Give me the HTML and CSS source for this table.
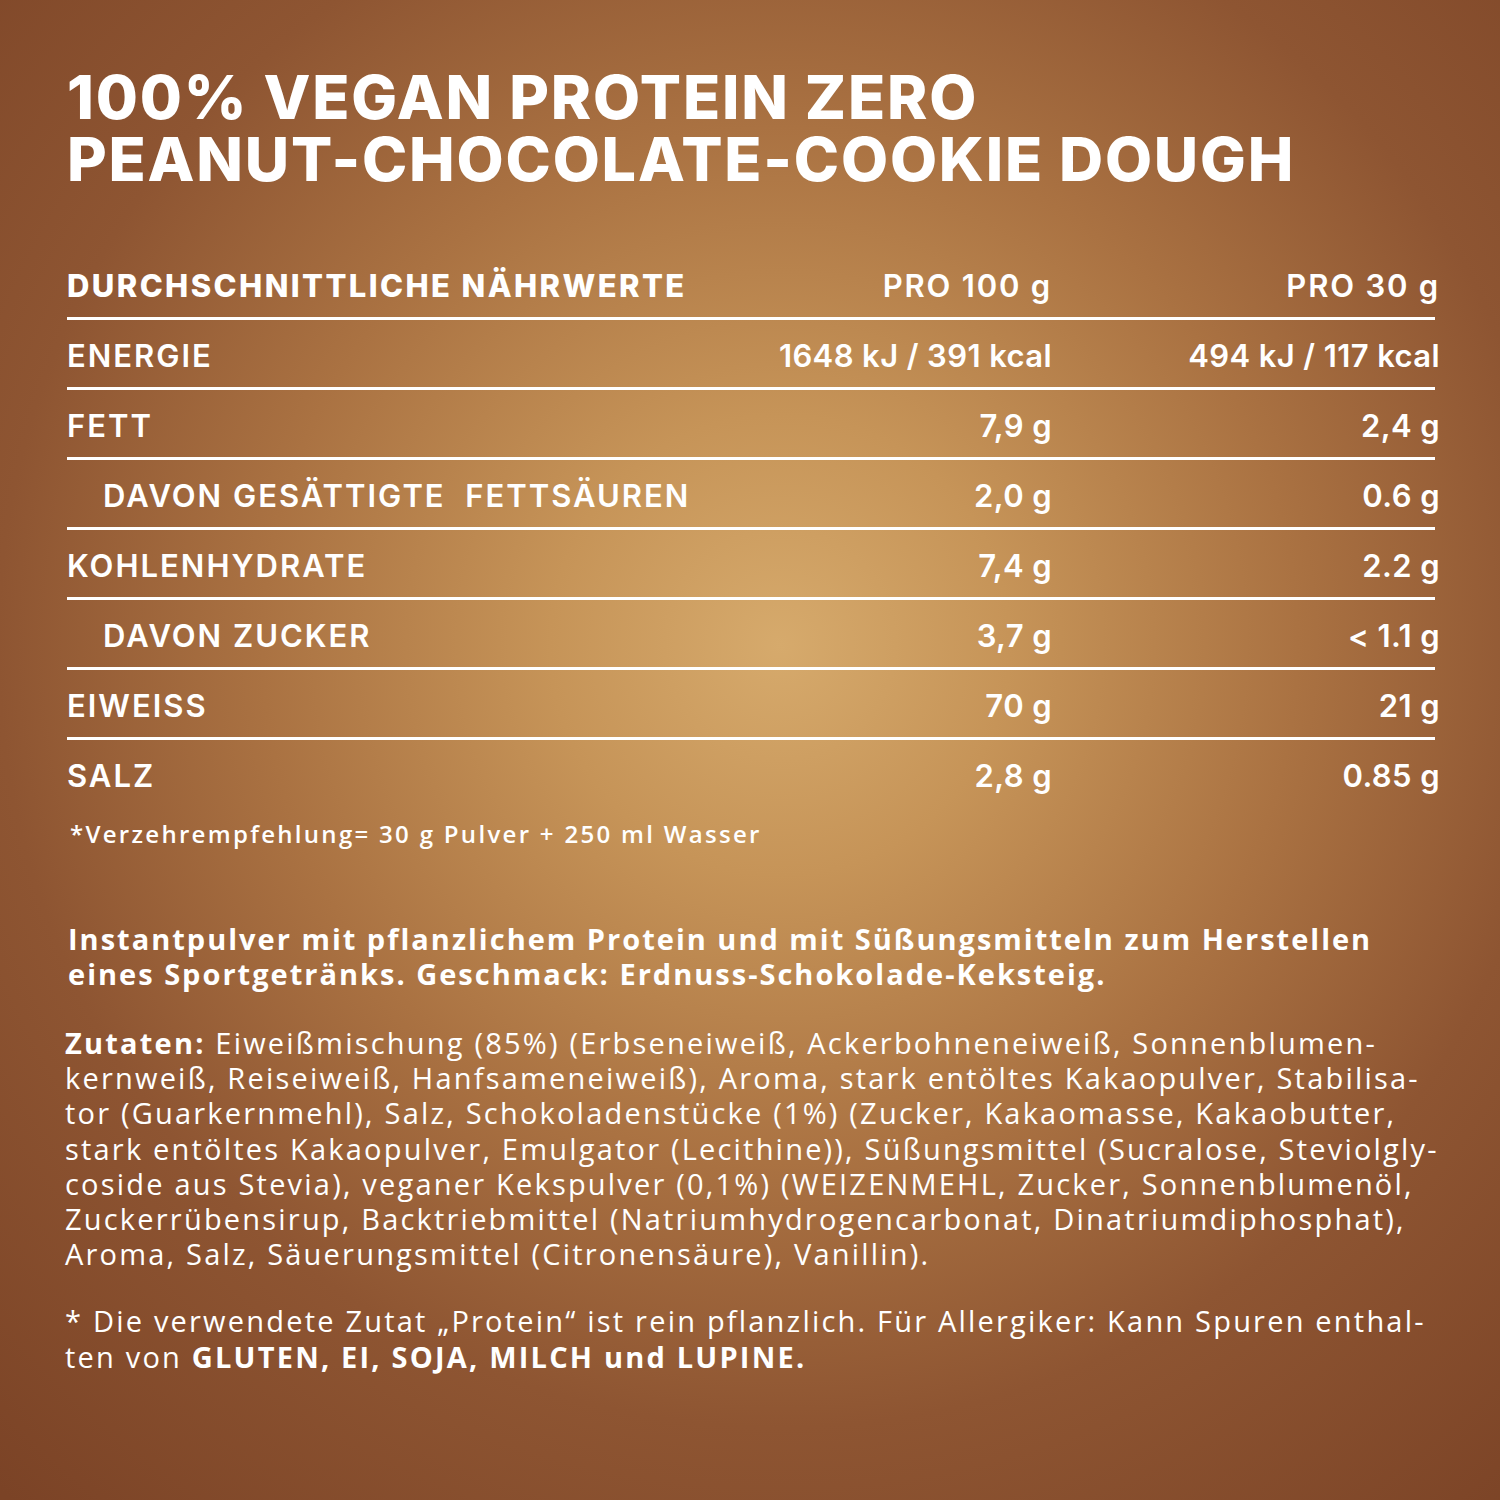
FILE: index.html
```html
<!DOCTYPE html>
<html lang="de">
<head>
<meta charset="utf-8">
<title>100% Vegan Protein Zero</title>
<link rel="stylesheet" href="styles.css">
</head>
<body>
<div class="page">
  <h1 class="title"><span class="tline">100% VEGAN PROTEIN ZERO</span><span class="tline">PEANUT-CHOCOLATE-COOKIE DOUGH</span></h1>

  <div class="table">
    <div class="row head">
      <div class="label">DURCHSCHNITTLICHE NÄHRWERTE</div>
      <div class="val">PRO 100 g</div>
      <div class="val">PRO 30 g</div>
    </div>
    <div class="row">
      <div class="label">ENERGIE</div>
      <div class="val">1648 kJ / 391 kcal</div>
      <div class="val">494 kJ / 117 kcal</div>
    </div>
    <div class="row">
      <div class="label">FETT</div>
      <div class="val">7,9 g</div>
      <div class="val">2,4 g</div>
    </div>
    <div class="row">
      <div class="label sub">DAVON GESÄTTIGTE &nbsp;FETTSÄUREN</div>
      <div class="val">2,0 g</div>
      <div class="val">0.6 g</div>
    </div>
    <div class="row">
      <div class="label">KOHLENHYDRATE</div>
      <div class="val">7,4 g</div>
      <div class="val">2.2 g</div>
    </div>
    <div class="row">
      <div class="label sub">DAVON ZUCKER</div>
      <div class="val">3,7 g</div>
      <div class="val">&lt; 1.1 g</div>
    </div>
    <div class="row">
      <div class="label">EIWEISS</div>
      <div class="val">70 g</div>
      <div class="val">21 g</div>
    </div>
    <div class="row last">
      <div class="label">SALZ</div>
      <div class="val">2,8 g</div>
      <div class="val">0.85 g</div>
    </div>
  </div>

  <p class="note">*Verzehrempfehlung= 30 g Pulver + 250 ml Wasser</p>

  <p class="desc">Instantpulver mit pflanzlichem Protein und mit Süßungsmitteln zum Herstellen<br>eines Sportgetränks. Geschmack: Erdnuss-Schokolade-Keksteig.</p>

  <p class="ingr"><b>Zutaten:</b> Eiweißmischung (85%) (Erbseneiweiß, Ackerbohneneiweiß, Sonnenblumen-<br>kernweiß, Reiseiweiß, Hanfsameneiweiß), Aroma, stark entöltes Kakaopulver, Stabilisa-<br>tor (Guarkernmehl), Salz, Schokoladenstücke (1%) (Zucker, Kakaomasse, Kakaobutter,<br>stark entöltes Kakaopulver, Emulgator (Lecithine)), Süßungsmittel (Sucralose, Steviolgly-<br>coside aus Stevia), veganer Kekspulver (0,1%) (WEIZENMEHL, Zucker, Sonnenblumenöl,<br>Zuckerrübensirup, Backtriebmittel (Natriumhydrogencarbonat, Dinatriumdiphosphat),<br>Aroma, Salz, Säuerungsmittel (Citronensäure), Vanillin).</p>

  <p class="ingr allergy">* Die verwendete Zutat „Protein“ ist rein pflanzlich. Für Allergiker: Kann Spuren enthal-<br>ten von <b>GLUTEN, EI, SOJA, MILCH und LUPINE.</b></p>
</div>
</body>
</html>
```

FILE: styles.css
```css
* { box-sizing: border-box; }
html, body { margin: 0; padding: 0; }
body {
  width: 1500px;
  height: 1500px;
  overflow: hidden;
}
.page {
  width: 1500px;
  height: 1500px;
  padding: 66px 30px 0 67px;
  color: #ffffff;
  background: radial-gradient(circle 1150px at 52% 43%, #d6aa6c 0%, #c69458 20%, #aa7242 45%, #8e5532 68%, #7b4326 100%);
  display: flex;
  flex-direction: column;
}
.title {
  margin: 0;
  font-family: "Inter", "Lato", sans-serif;
  font-weight: 800;
  font-size: 61px;
  line-height: 62px;
  letter-spacing: 1.8px;
  display: flex;
  flex-direction: column;
}
.tline {
  display: block;
  height: 62px;
  line-height: 62px;
  white-space: nowrap;
}
.table {
  margin-top: 60px;
  width: 1373px;
  display: flex;
  flex-direction: column;
  font-family: "Inter", "Lato", sans-serif;
  font-size: 31px;
}
.row {
  display: grid;
  grid-template-columns: 597px 388px 388px;
  align-items: center;
  height: 70px;
  position: relative;
}
.row::after {
  content: "";
  position: absolute;
  left: 0;
  right: 5px;
  bottom: 0;
  height: 3px;
  background: #ffffff;
}
.row.last::after { display: none; }
.label {
  font-weight: 600;
  letter-spacing: 2px;
  white-space: nowrap;
}
.label.sub { padding-left: 36px; }
.head .label { font-weight: 800; letter-spacing: 2.4px; }
.val {
  text-align: right;
  font-weight: 600;
  letter-spacing: 0.4px;
  white-space: nowrap;
}
.head .val { letter-spacing: 1.8px; }
.note {
  margin: 9px 0 0 3px;
  font-family: "Open Sans", sans-serif;
  font-weight: 600;
  font-size: 24px;
  line-height: 30px;
  letter-spacing: 2.3px;
}
.desc {
  margin: 72px 0 0 1px;
  font-family: "Open Sans", sans-serif;
  font-weight: 700;
  font-size: 29px;
  line-height: 35px;
  letter-spacing: 2px;
  white-space: nowrap;
}
.ingr {
  margin: 34px 0 0 -2px;
  font-family: "Open Sans", sans-serif;
  font-weight: 400;
  font-size: 29px;
  line-height: 35.2px;
  letter-spacing: 2.2px;
  white-space: nowrap;
}
.ingr b { font-weight: 700; }
.allergy { margin-top: 32px; }
```
